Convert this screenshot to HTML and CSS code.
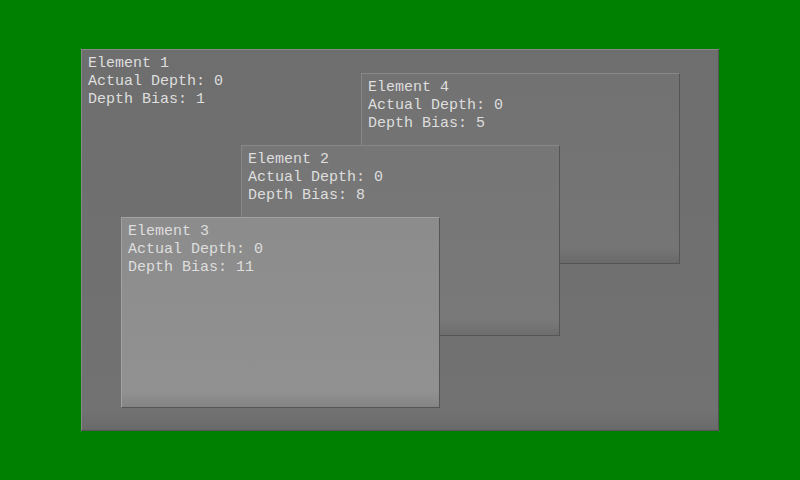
FILE: index.html
```html
<!DOCTYPE html>
<html>
<head>
<meta charset="utf-8">
<link rel="stylesheet" href="styles.css">
</head>
<body>
<div class="panel main">
  <div class="label">Element 1<br>Actual Depth: 0<br>Depth Bias: 1</div>
  <div class="panel win win4">
    <div class="label">Element 4<br>Actual Depth: 0<br>Depth Bias: 5</div>
  </div>
  <div class="panel win win2">
    <div class="label">Element 2<br>Actual Depth: 0<br>Depth Bias: 8</div>
  </div>
  <div class="panel win win3">
    <div class="label">Element 3<br>Actual Depth: 0<br>Depth Bias: 11</div>
  </div>
</div>
</body>
</html>
```
FILE: styles.css
```css
html, body {
  margin: 0;
  padding: 0;
  background: #008000;
  width: 800px;
  height: 480px;
  overflow: hidden;
}
body {
  padding-top: 49px;
  box-sizing: border-box;
}
.panel {
  box-sizing: border-box;
  border-top: 1px solid #888888;
  border-left: 1px solid #888888;
  border-right: 1px solid #555;
  border-bottom: 1px solid #555;
}
.main {
  position: relative;
  margin-left: 81px;
  width: 638px;
  height: 382px;
  background: linear-gradient(to bottom, #6e6e6e 0, #727272 95%, #6a6a6a 100%);
}
.label {
  font-family: "Liberation Mono", "Courier New", monospace;
  font-size: 15px;
  line-height: 18px;
  color: #dedede;
  padding: 5px 0 0 6px;
}
.win {
  position: absolute;
  width: 319px;
  height: 191px;
}
.win4 {
  left: 279px;
  top: 23px;
  background: linear-gradient(to bottom, #727272 0, #757575 92%, #6a6a6a 100%);
}
.win2 {
  left: 159px;
  top: 95px;
  background: linear-gradient(to bottom, #767676 0, #797979 92%, #6d6d6d 100%);
}
.win3 {
  left: 39px;
  top: 167px;
  background: linear-gradient(to bottom, #8c8c8c 0, #919191 92%, #848484 100%);
  border-top-color: #a2a2a2;
  border-left-color: #a2a2a2;
}
```
